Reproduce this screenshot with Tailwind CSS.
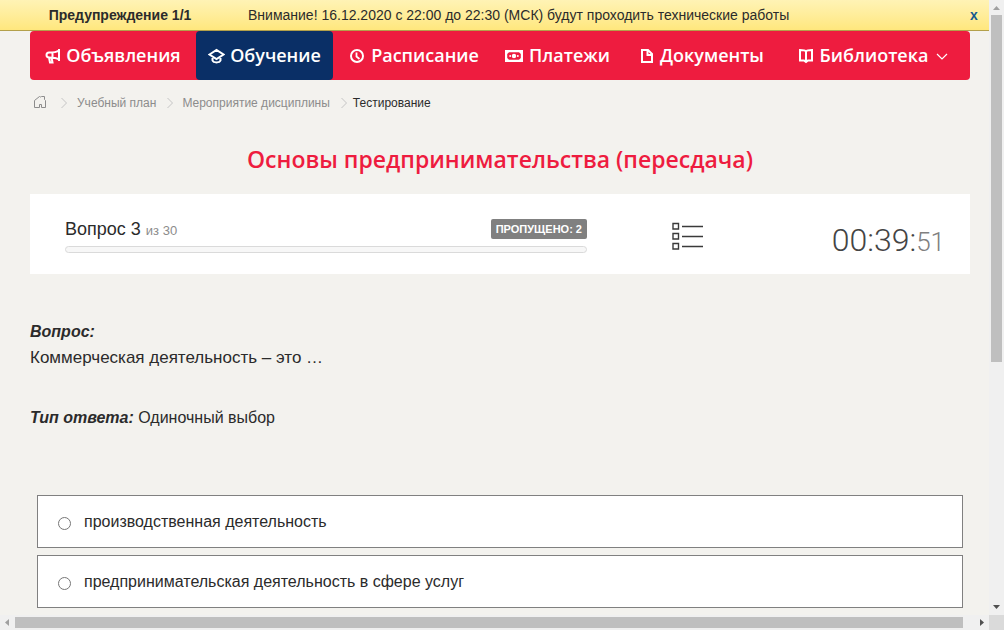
<!DOCTYPE html>
<html lang="ru">
<head>
<meta charset="utf-8">
<meta name="viewport" content="width=device-width, initial-scale=1">
<title>Тестирование</title>
<script src="https://cdn.jsdelivr.net/npm/@tailwindcss/browser@4"></script>
</head>
<body class="grid h-screen grid-cols-[minmax(0,1fr)_15px] grid-rows-[minmax(0,1fr)_15px] overflow-hidden bg-[#f3f2ee] font-['Liberation_Sans',sans-serif] text-[#2b2b2b]">
<div class="overflow-hidden">
  <aside class="flex h-[31px] items-center border-b border-[#b3a04a] bg-linear-to-b from-[#fff3b5] to-[#ffe77d] text-sm">
    <strong class="w-60 text-center">Предупреждение 1/1</strong>
    <p class="flex-1 pl-2">Внимание! 16.12.2020 с 22:00 до 22:30 (МСК) будут проходить технические работы</p>
    <button type="button" aria-label="Закрыть" class="w-[30px] font-bold text-[#15598f]">x</button>
  </aside>

  <div class="min-w-[1000px] px-[30px]">
    <nav class="grid h-[49px] grid-cols-[166fr_137fr_162fr_125fr_164fr_186fr] overflow-hidden rounded bg-[#ee1c3f] font-['Open_Sans',sans-serif] text-lg font-semibold text-white">
      <a href="#" class="flex items-center justify-center gap-[5px]">
        <svg class="size-4" viewBox="0 0 16 16" fill="none" stroke="currentColor" stroke-width="2"><path d="M14 1v12M14 2.500C11 4.500 8 4.500 4 4.500a2.500 2.500 0 0 0 0 5c4 0 7 0 10 2M7.500 4.500v5M4 9.500l1 5h2.500l-1-5"/></svg>
        <span class="pb-0.5">Объявления</span></a>
      <a href="#" aria-current="page" class="flex items-center justify-center gap-[5px] rounded bg-[#0a2f66]">
        <svg class="h-4 w-[17px]" viewBox="0 0 17 16" fill="none" stroke="currentColor" stroke-width="2"><path d="M1.500 6.500 8.500 2l7 4.500-7 4.500zM4.500 8.500v4c1 2.500 7 2.500 8 0v-4"/></svg>
        <span class="pb-0.5">Обучение</span></a>
      <a href="#" class="flex items-center justify-center gap-1.5">
        <svg class="size-4" viewBox="0 0 16 16" fill="none" stroke="currentColor" stroke-width="2"><circle cx="8" cy="8" r="6"/><path d="M7.500 4.500v4l3 2.500" stroke-width="1.800"/></svg>
        <span class="pb-0.5">Расписание</span></a>
      <a href="#" class="flex items-center justify-center gap-1.5">
        <svg class="h-4 w-[18px]" viewBox="0 0 18 16" fill="currentColor"><path fill-rule="evenodd" d="M0 2h18v12H0zM4 4.300 2.200 6v4L4 11.700h10L15.800 10V6L14 4.300z"/><circle cx="9" cy="8" r="2.200"/><circle cx="5.200" cy="8" r="1"/><circle cx="12.800" cy="8" r="1"/></svg>
        <span class="pb-0.5">Платежи</span></a>
      <a href="#" class="flex items-center justify-center gap-1.5">
        <svg class="h-4 w-3.5" viewBox="0 0 14 16" fill="none" stroke="currentColor" stroke-width="2"><path d="M2 2h6l4 4v8H2zM7.500 2v5H12"/></svg>
        <span class="pb-0.5">Документы</span></a>
      <a href="#" class="flex items-center justify-center gap-1.5 pr-2">
        <svg class="size-4" viewBox="0 0 16 16" fill="none" stroke="currentColor" stroke-width="2"><path d="M8 3.500C7 2 5 2 2 2v10.500h4l2 1.500 2-1.500h4V2c-3 0-5 0-6 1.500zV14"/></svg>
        <span class="pb-0.5">Библиотека</span>
        <svg class="ml-0.5 size-3" viewBox="0 0 12 12" fill="none" stroke="currentColor" stroke-width="1.200"><path d="m1 4 5 5 5-5"/></svg></a>
    </nav>

    <nav aria-label="Навигация" class="flex h-[46px] items-center text-xs text-[#8c8c8c]">
      <a href="#" aria-label="Главная" class="ml-[3px]"><svg class="mb-0.5 size-3.5" viewBox="0 0 14 14" fill="none" stroke="currentColor"><path d="M1.500 12.500v-7L6.500 1.500l1 .5 1-.5h3v3l1 1v7h-4v-3h-2v3z"/></svg></a>
      <svg class="ml-3.5 h-3 w-[7px] text-[#c4c4c4]" viewBox="0 0 7 12" fill="none" stroke="currentColor"><path d="m.5 1 5 5-5 5"/></svg>
      <a href="#" class="ml-[9px]">Учебный план</a>
      <svg class="ml-[11px] h-3 w-[7px] text-[#c4c4c4]" viewBox="0 0 7 12" fill="none" stroke="currentColor"><path d="m.5 1 5 5-5 5"/></svg>
      <a href="#" class="ml-2">Мероприятие дисциплины</a>
      <svg class="ml-[11px] h-3 w-[7px] text-[#c4c4c4]" viewBox="0 0 7 12" fill="none" stroke="currentColor"><path d="m.5 1 5 5-5 5"/></svg>
      <span aria-current="page" class="ml-[5px] text-[#2b2b2b]">Тестирование</span>
    </nav>

    <h1 class="pt-[15px] pb-[17px] text-center font-['Open_Sans',sans-serif] text-[23px] leading-9 font-semibold text-[#ee1c3f]">Основы предпринимательства (пересдача)</h1>

    <section class="flex h-20 bg-white pr-[25px] pl-[35px]">
      <div class="w-[522px] pt-[25px]">
        <div class="flex h-5 items-center justify-between">
          <p class="text-lg">Вопрос 3 <span class="text-[13px] text-[#8c8c8c]">из 30</span></p>
          <span class="rounded-xs bg-[#808080] px-[5px] text-[11px] leading-5 font-bold text-white">ПРОПУЩЕНО: 2</span>
        </div>
        <div role="progressbar" aria-valuenow="0" aria-valuemin="0" aria-valuemax="30" class="mt-[7px] h-[7px] rounded-full border border-[#dadada] bg-[#f7f7f7]"></div>
      </div>
      <button type="button" aria-label="Список вопросов" class="ml-[85px] self-start pt-7"><svg class="h-7 w-[31px]" viewBox="0 0 31 28" fill="none" stroke="#3a3a3a" stroke-width="1.400"><path d="M1 1.500h5.500v5.500H1zM1 11.500h5.500v5.500H1zM1 21.500h5.500v5.500H1zM10 4.500h21M10 14.500h21M10 24.500h21"/></svg></button>
      <div role="timer" class="ml-auto flex items-baseline pt-[26px] font-['Roboto',sans-serif] text-[32px] leading-10 font-light text-[#444]">00:39:<span class="text-[26px] text-[#808080]">51</span></div>
    </section>

    <main class="pt-[45px]">
      <p class="leading-[26px] font-bold italic">Вопрос:</p>
      <p class="text-[17px] leading-[26px]">Коммерческая деятельность – это …</p>
      <p class="mt-[34px] leading-[26px]"><strong class="italic">Тип ответа:</strong> Одиночный выбор</p>
      <fieldset class="mt-16 space-y-[7px] px-[7px]">
        <label class="flex h-[53px] items-center border border-[#808080] bg-white pl-5"><input type="radio" name="answer" class="mt-1 mr-[13px] size-[13px]"><span>производственная деятельность</span></label>
        <label class="flex h-[53px] items-center border border-[#808080] bg-white pl-5"><input type="radio" name="answer" class="mt-1 mr-[13px] size-[13px]"><span>предпринимательская деятельность в сфере услуг</span></label>
      </fieldset>
    </main>
  </div>
</div>

<!-- Vertical scroll bar -->
<div class="flex flex-col items-center bg-[#f0f0f0]">
  <svg class="h-[15px] w-[15px] shrink-0" viewBox="0 0 15 15" fill="#a0a0a0"><path d="M4 10h7L7.500 6z"/></svg>
  <div class="h-[56.5%] w-[11px] bg-[#bfbfbf]"></div>
  <svg class="mt-auto h-[15px] w-[15px] shrink-0" viewBox="0 0 15 15" fill="#505050"><path d="M4 5h7L7.500 9z"/></svg>
</div>
<!-- Horizontal scroll bar -->
<div class="flex items-center bg-[#f0f0f0]">
  <svg class="h-[15px] w-[15px] shrink-0" viewBox="0 0 15 15" fill="#a0a0a0"><path d="M9 4v7L5 7.500z"/></svg>
  <div class="mr-[11px] h-[11px] flex-1 bg-[#bfbfbf]"></div>
  <svg class="h-[15px] w-[15px] shrink-0" viewBox="0 0 15 15" fill="#505050"><path d="M6 4v7l4-3.500z"/></svg>
</div>
<div class="bg-[#dadada]"></div>
</body>
</html>
